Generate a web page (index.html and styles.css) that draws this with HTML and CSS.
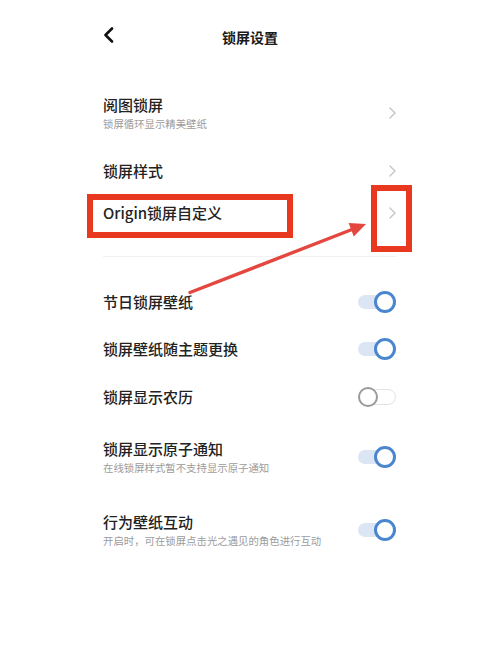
FILE: index.html
```html
<!DOCTYPE html>
<html lang="zh-CN">
<head>
<meta charset="utf-8">
<title>锁屏设置</title>
<link rel="stylesheet" href="styles.css">
</head>
<body>
<div class="screen">
  <header class="topbar">
    <span class="back">
      <svg width="11" height="16" viewBox="0 0 11 16"><polyline points="9,1.5 2.5,8 9,14.5" fill="none" stroke="#111" stroke-width="2.6" stroke-linecap="round" stroke-linejoin="round"/></svg>
    </span>
    <h1 class="title">锁屏设置</h1>
    <span></span>
  </header>

  <section class="group">
    <div class="row row-1">
      <div class="text">
        <div class="label">阅图锁屏</div>
        <div class="sub">锁屏循环显示精美壁纸</div>
      </div>
      <svg class="chev" width="7" height="12" viewBox="0 0 7 12"><polyline points="1,1 6,6 1,11" fill="none" stroke="#c4c4c4" stroke-width="1.4" stroke-linecap="round" stroke-linejoin="round"/></svg>
    </div>
    <div class="row row-2">
      <div class="label">锁屏样式</div>
      <svg class="chev" width="7" height="12" viewBox="0 0 7 12"><polyline points="1,1 6,6 1,11" fill="none" stroke="#c4c4c4" stroke-width="1.4" stroke-linecap="round" stroke-linejoin="round"/></svg>
    </div>
    <div class="row row-3">
      <div class="label">Origin锁屏自定义</div>
      <svg class="chev" width="7" height="12" viewBox="0 0 7 12"><polyline points="1,1 6,6 1,11" fill="none" stroke="#c4c4c4" stroke-width="1.4" stroke-linecap="round" stroke-linejoin="round"/></svg>
    </div>
  </section>

  <div class="divider"></div>

  <section class="group toggles">
    <div class="row row-s">
      <div class="label">节日锁屏壁纸</div>
      <span class="switch on"></span>
    </div>
    <div class="row row-s">
      <div class="label">锁屏壁纸随主题更换</div>
      <span class="switch on"></span>
    </div>
    <div class="row row-s">
      <div class="label">锁屏显示农历</div>
      <span class="switch off"></span>
    </div>
    <div class="row row-d">
      <div class="text">
        <div class="label">锁屏显示原子通知</div>
        <div class="sub">在线锁屏样式暂不支持显示原子通知</div>
      </div>
      <span class="switch on"></span>
    </div>
    <div class="row row-d">
      <div class="text">
        <div class="label">行为壁纸互动</div>
        <div class="sub">开启时，可在锁屏点击光之遇见的角色进行互动</div>
      </div>
      <span class="switch on"></span>
    </div>
  </section>

  <div class="annot box-label"></div>
  <div class="annot box-chev"></div>
  <svg class="arrow" width="500" height="653" viewBox="0 0 500 653">
    <line x1="190" y1="292.5" x2="352" y2="229.5" stroke="#e4473f" stroke-width="3.4" stroke-linecap="round"/>
    <polygon points="366,224 353.8,236.5 348.6,223" fill="#e4473f"/>
  </svg>
</div>
</body>
</html>
```

FILE: styles.css
```css
html, body {
  margin: 0;
  padding: 0;
  background: #fff;
}

body {
  font-family: "Noto Sans CJK SC", "Noto Sans", sans-serif;
  color: #222;
}

.screen {
  position: relative;
  width: 500px;
  height: 653px;
  overflow: hidden;
  background: #fff;
}

.topbar {
  height: 74px;
  display: grid;
  grid-template-columns: 1fr auto 1fr;
  align-items: center;
  padding: 0 103px;
}

.back {
  display: flex;
  align-items: center;
  margin-top: -4px;
}

.title {
  margin: 0;
  font-size: 14px;
  line-height: 20px;
  font-weight: 700;
  color: #1a1a1a;
}

.row {
  display: flex;
  align-items: center;
  justify-content: space-between;
  padding: 0 104px 0 103px;
}

.row-1 { height: 78px; }
.row-2 { height: 38px; }
.row-3 { height: 46px; }
.row-s { height: 47.5px; }
.row-d { height: 73px; }

.chev {
  display: block;
}

.label {
  font-size: 15px;
  line-height: 20px;
  font-weight: 500;
  color: #222;
}

.sub {
  margin-top: 2px;
  font-size: 10.4px;
  line-height: 14px;
  color: #9c9c9c;
}

.divider {
  margin: 20px 104px 0 103px;
  height: 1px;
  background: #f1f1f1;
}

.toggles {
  padding-top: 21px;
}

.switch {
  position: relative;
  display: block;
  width: 38px;
  height: 22px;
}

.switch::before {
  content: "";
  position: absolute;
  top: 4px;
  left: 0;
  right: 4px;
  height: 14px;
  border-radius: 7px;
  background: #dbe5f3;
}

.switch::after {
  content: "";
  position: absolute;
  top: 0;
  right: 0;
  width: 22px;
  height: 22px;
  box-sizing: border-box;
  border-radius: 50%;
  border: 3px solid #4a86cf;
  background: #fff;
}

.switch.off::before {
  left: 2px;
  right: 0;
  top: 3px;
  height: 16px;
  border-radius: 8px;
  background: #fff;
  border: 1px solid #e3e3e3;
  box-sizing: border-box;
}

.switch.off::after {
  right: auto;
  left: 0;
  width: 20px;
  height: 20px;
  top: 1px;
  border: 2.5px solid #9a9a9a;
}

.annot {
  position: absolute;
  box-sizing: border-box;
  border: 6px solid #e8381f;
}

.box-label {
  left: 87px;
  top: 194px;
  width: 206px;
  height: 44px;
}

.box-chev {
  left: 371px;
  top: 185px;
  width: 41px;
  height: 67px;
}

.arrow {
  position: absolute;
  left: 0;
  top: 0;
  pointer-events: none;
}
```
